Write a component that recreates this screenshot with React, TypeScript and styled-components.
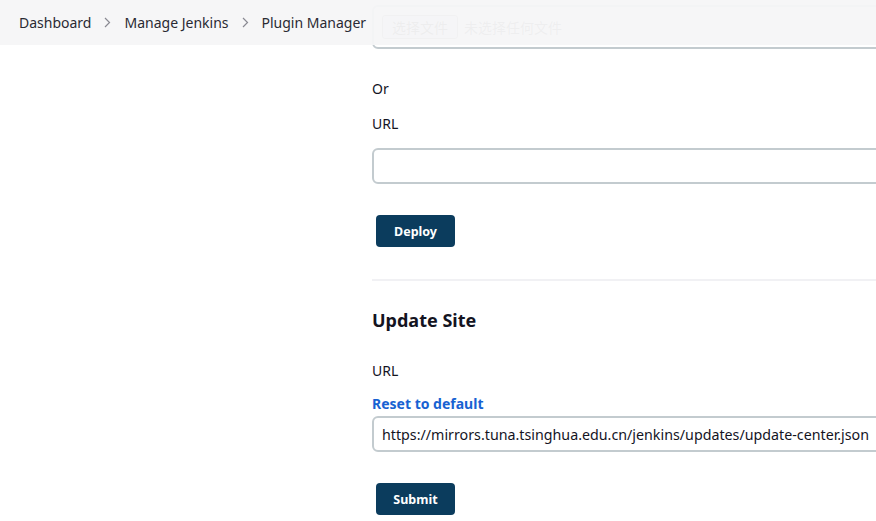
import React from "react";
import styled, { createGlobalStyle } from "styled-components";

const GlobalStyle = createGlobalStyle`
  html, body {
    margin: 0;
    padding: 0;
    background: #fff;
    overflow: hidden;
  }
  body {
    font-family: "Noto Sans", "Noto Sans CJK SC", sans-serif;
    color: #14141f;
    font-size: 14px;
  }
`;

const Page = styled.div`
  position: relative;
  width: 876px;
  height: 521px;
  overflow: hidden;
  display: grid;
  grid-template-columns: 372px 640px;
`;

const Breadcrumbs = styled.nav`
  position: absolute;
  top: 0;
  left: 0;
  right: 0;
  height: 45px;
  display: flex;
  align-items: center;
  padding-left: 19px;
  gap: 13px;
  background: rgba(245, 245, 247, 0.95);
  z-index: 2;
`;

const Crumb = styled.span`
  font-size: 14px;
  color: #2a2a33;
  white-space: nowrap;
`;

const Chevron = () => (
  <svg width="7" height="11" viewBox="0 0 7 11" fill="none">
    <path d="M1 1 L5.5 5.5 L1 10" stroke="#8a8a92" strokeWidth="1.2" />
  </svg>
);

const Main = styled.main`
  grid-column: 2;
  display: flex;
  flex-direction: column;
  align-items: flex-start;
`;

const FileBox = styled.div`
  box-sizing: border-box;
  margin-top: 5px;
  width: 100%;
  height: 44px;
  border: 2px solid #c3cbcf;
  border-radius: 6px;
  display: flex;
  align-items: center;
  padding: 0 8px;
  gap: 6px;
`;

const FileButton = styled.span`
  box-sizing: border-box;
  height: 24px;
  padding: 0 9px;
  display: flex;
  align-items: center;
  border: 1px solid #9a9aa0;
  border-radius: 3px;
  background: #ececf0;
  font-size: 14px;
  color: #555;
`;

const FileName = styled.span`
  font-size: 14px;
  color: #666;
`;

const Text = styled.div<{ $top: number }>`
  margin-top: ${(p) => p.$top}px;
  line-height: 22px;
  font-size: 14px;
`;

const TextInput = styled.input<{ $top: number }>`
  box-sizing: border-box;
  margin-top: ${(p) => p.$top}px;
  width: 100%;
  height: 36px;
  border: 2px solid #c3cbcf;
  border-radius: 6px;
  padding: 0 8px;
  font-family: inherit;
  font-size: 14.25px;
  color: #14141f;
  background: #fff;
  outline: none;
`;

const PrimaryButton = styled.button<{ $top: number }>`
  margin-top: ${(p) => p.$top}px;
  margin-left: 4px;
  width: 79px;
  height: 32px;
  border: none;
  border-radius: 4px;
  background: #0b3c5d;
  color: #fff;
  font-family: inherit;
  font-weight: 700;
  font-size: 12.5px;
  cursor: pointer;
`;

const Separator = styled.hr`
  margin: 32px 0 0;
  width: 100%;
  height: 2px;
  border: none;
  background: #f1f1f4;
`;

const Heading = styled.h2`
  margin: 26px 0 0;
  font-size: 18px;
  line-height: 26px;
  font-weight: 700;
`;

const ResetLink = styled.a`
  margin-top: 12px;
  line-height: 20px;
  font-size: 14px;
  font-weight: 700;
  color: #1762d2;
  text-decoration: none;
`;

export default function App() {
  return (
    <>
      <GlobalStyle />
      <Page>
        <Breadcrumbs>
          <Crumb>Dashboard</Crumb>
          <Chevron />
          <Crumb>Manage Jenkins</Crumb>
          <Chevron />
          <Crumb>Plugin Manager</Crumb>
        </Breadcrumbs>
        <Main>
          <FileBox>
            <FileButton>选择文件</FileButton>
            <FileName>未选择任何文件</FileName>
          </FileBox>
          <Text $top={29}>Or</Text>
          <Text $top={13}>URL</Text>
          <TextInput $top={13} defaultValue="" />
          <PrimaryButton $top={31}>Deploy</PrimaryButton>
          <Separator />
          <Heading>Update Site</Heading>
          <Text $top={27}>URL</Text>
          <ResetLink href="#">Reset to default</ResetLink>
          <TextInput
            $top={2}
            defaultValue="https://mirrors.tuna.tsinghua.edu.cn/jenkins/updates/update-center.json"
          />
          <PrimaryButton $top={31}>Submit</PrimaryButton>
        </Main>
      </Page>
    </>
  );
}
